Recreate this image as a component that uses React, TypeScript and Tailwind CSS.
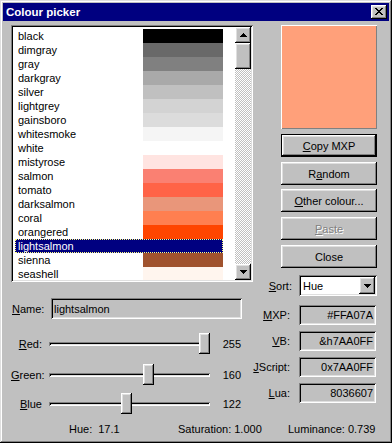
import type { ReactNode } from 'react';

const raised =
  'shadow-[inset_-1px_-1px_0_#000,inset_1px_1px_0_#fff,inset_-2px_-2px_0_#808080,inset_2px_2px_0_#dfdfdf]';
const sunken =
  'shadow-[inset_1px_1px_0_#808080,inset_-1px_-1px_0_#fff,inset_2px_2px_0_#000,inset_-2px_-2px_0_#dfdfdf]';

const colours: [string, string][] = [
  ['black', '#000000'],
  ['dimgray', '#696969'],
  ['gray', '#808080'],
  ['darkgray', '#a9a9a9'],
  ['silver', '#c0c0c0'],
  ['lightgrey', '#d3d3d3'],
  ['gainsboro', '#dcdcdc'],
  ['whitesmoke', '#f5f5f5'],
  ['white', '#ffffff'],
  ['mistyrose', '#ffe4e1'],
  ['salmon', '#fa8072'],
  ['tomato', '#ff6347'],
  ['darksalmon', '#e9967a'],
  ['coral', '#ff7f50'],
  ['orangered', '#ff4500'],
  ['lightsalmon', '#ffa07a'],
  ['sienna', '#a0522d'],
  ['seashell', '#fff5ee'],
];

// access-key label: underline one letter
function Ak({ text, at = 0 }: { text: string; at?: number }) {
  return (
    <>
      {text.slice(0, at)}
      <u className="underline-offset-[1px]">{text[at]}</u>
      {text.slice(at + 1)}
    </>
  );
}

function Arrow({ down }: { down?: boolean }) {
  return (
    <svg width="7" height="4" viewBox="0 0 7 4" shapeRendering="crispEdges" className={down ? 'rotate-180' : ''}>
      <rect x="3" y="0" width="1" height="1" />
      <rect x="2" y="1" width="3" height="1" />
      <rect x="1" y="2" width="5" height="1" />
      <rect x="0" y="3" width="7" height="1" />
    </svg>
  );
}

function TitleBar() {
  return (
    <div className="flex h-[18px] items-center bg-[#000080] pl-[3px] pr-[2px]">
      <span className="flex-1 text-[11.5px] font-bold text-white">Colour picker</span>
      <div className={`flex h-[14px] w-[16px] items-center justify-center bg-[#c0c0c0] ${raised}`}>
        <svg width="8" height="7" viewBox="0 0 8 7" shapeRendering="crispEdges" className="-mt-px">
          <rect x="0" y="0" width="2" height="1" />
          <rect x="6" y="0" width="2" height="1" />
          <rect x="1" y="1" width="2" height="1" />
          <rect x="5" y="1" width="2" height="1" />
          <rect x="2" y="2" width="4" height="1" />
          <rect x="3" y="3" width="2" height="1" />
          <rect x="2" y="4" width="4" height="1" />
          <rect x="1" y="5" width="2" height="1" />
          <rect x="5" y="5" width="2" height="1" />
          <rect x="0" y="6" width="2" height="1" />
          <rect x="6" y="6" width="2" height="1" />
        </svg>
      </div>
    </div>
  );
}

function ListBox() {
  return (
    <div className={`flex h-[257px] w-[242px] bg-white p-[2px] ${sunken}`}>
      <div className="flex-1 overflow-hidden pl-[2px] pt-[2px]">
        {colours.map(([name, hex]) => {
          const sel = name === 'lightsalmon';
          return (
            <div
              key={name}
              className={`flex h-[14px] w-[208px] ${
                sel ? 'bg-[#000080] text-white outline-1 -outline-offset-1 outline-dotted outline-[#ffff80]' : ''
              }`}
            >
              <span className="flex-1 pl-[3px]">{name}</span>
              {!sel && <span className="h-[14px] w-[80px]" style={{ background: hex }} />}
            </div>
          );
        })}
      </div>
      <div className="flex w-[16px] flex-col">
        <div className={`flex h-[16px] items-center justify-center bg-[#c0c0c0] ${raised}`}>
          <Arrow />
        </div>
        <div className={`h-[26px] bg-[#c0c0c0] ${raised}`} />
        <div className="flex-1 bg-[repeating-conic-gradient(#c0c0c0_0%_25%,#ffffff_0%_50%)] bg-[length:2px_2px]" />
        <div className={`flex h-[16px] items-center justify-center bg-[#c0c0c0] ${raised}`}>
          <Arrow down />
        </div>
      </div>
    </div>
  );
}

function Slider({ label, value, extra }: { label: string; value: number; extra: string }) {
  return (
    <div className={`flex h-[21px] items-center ${extra}`}>
      <span className="w-[31px] text-right">
        <Ak text={label} />
      </span>
      <div className="relative ml-[7px] flex h-[21px] w-[161px] items-center">
        <div className={`h-[4px] w-full bg-[#c0c0c0] ${sunken}`} />
        <div
          className={`absolute top-0 h-[21px] w-[11px] bg-[#c0c0c0] ${raised}`}
          style={{ left: Math.round((value / 255) * 150) }}
        />
      </div>
      <span className="w-[31px] text-right">{value}</span>
    </div>
  );
}

function Button({ children, def, extra = 'mt-[5px]' }: { children: ReactNode; def?: boolean; extra?: string }) {
  return (
    <div
      className={`ml-[28px] flex h-[23px] w-[96px] items-center justify-center bg-[#c0c0c0] ${raised} ${
        def ? 'border border-black' : ''
      } ${extra}`}
    >
      {children}
    </div>
  );
}

function CodeRow({ label, at, value, extra }: { label: string; at: number; value: string; extra: string }) {
  return (
    <div className={`flex h-[20px] items-center pr-[1px] ${extra}`}>
      <span className="flex-1 pr-[9px] text-right">
        <Ak text={label} at={at} />
      </span>
      <div className={`flex h-[20px] w-[77px] items-center justify-end bg-[#c0c0c0] pr-[3px] ${sunken}`}>{value}</div>
    </div>
  );
}

export default function App() {
  return (
    <div className="flex h-[443px] w-[392px] flex-col bg-[#c0c0c0] p-[3px] font-['Liberation_Sans',Arial,sans-serif] text-[11px] leading-[14px] text-black shadow-[inset_-1px_-1px_0_#000,inset_1px_1px_0_#dfdfdf,inset_-2px_-2px_0_#808080,inset_2px_2px_0_#fff]">
      <TitleBar />
      <div className="flex pl-[8px] pt-[4px]">
        <div className="flex w-[242px] flex-col">
          <ListBox />
          <div className="mt-[16px] flex h-[21px] items-center">
            <span className="w-[40px] pl-[1px]">
              <Ak text="Name:" />
            </span>
            <div className={`flex h-[21px] w-[191px] items-center bg-[#c0c0c0] pl-[3px] ${sunken}`}>lightsalmon</div>
          </div>
          <Slider label="Red:" value={255} extra="mt-[14px]" />
          <Slider label="Green:" value={160} extra="mt-[10px]" />
          <Slider label="Blue" value={122} extra="mt-[8px]" />
        </div>
        <div className="flex w-[124px] flex-col">
          <div className="ml-[28px] h-[104px] w-[96px] bg-[#ffa07a] shadow-[inset_1px_1px_0_#fff,inset_-1px_-1px_0_#808080]" />
          <Button def>
            <Ak text="Copy MXP" />
          </Button>
          <Button>
            <Ak text="Random" at={1} />
          </Button>
          <Button extra="mt-[4px]">
            <Ak text="Other colour..." />
          </Button>
          <Button>
            <span className="text-[#808080] [text-shadow:1px_1px_0_#fff]">
              <Ak text="Paste" />
            </span>
          </Button>
          <Button>Close</Button>
          <div className="mt-[7px] flex h-[21px] items-center">
            <span className="flex-1 pr-[7px] text-right">
              <Ak text="Sort:" />
            </span>
            <div className={`flex h-[21px] w-[78px] items-center bg-white p-[2px] ${sunken}`}>
              <span className="flex-1 pl-[2px]">Hue</span>
              <div className={`flex h-[17px] w-[16px] items-center justify-center bg-[#c0c0c0] ${raised}`}>
                <Arrow down />
              </div>
            </div>
          </div>
          <CodeRow label="MXP:" at={0} value="#FFA07A" extra="mt-[9px]" />
          <CodeRow label="VB:" at={0} value="&h7AA0FF" extra="mt-[6px]" />
          <CodeRow label="JScript:" at={0} value="0x7AA0FF" extra="mt-[6px]" />
          <CodeRow label="Lua:" at={0} value="8036607" extra="mt-[6px]" />
        </div>
      </div>
      <div className="mt-[8px] flex">
        <span className="ml-[66px] w-[109px]">
          Hue:<span className="ml-[6px]">17.1</span>
        </span>
        <span className="w-[110px]">Saturation: 1.000</span>
        <span>Luminance: 0.739</span>
      </div>
    </div>
  );
}
